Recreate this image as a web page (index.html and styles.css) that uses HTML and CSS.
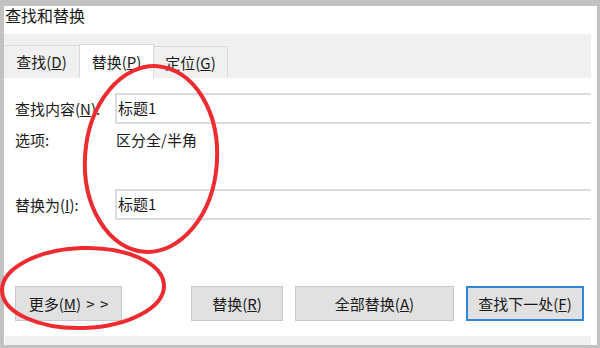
FILE: index.html
```html
<!DOCTYPE html>
<html lang="zh-CN">
<head>
<meta charset="utf-8">
<title>查找和替换</title>
<link rel="stylesheet" href="styles.css">
</head>
<body>
<div class="window">
  <div class="title">查找和替换</div>
  <div class="tabs">
    <div class="tab tab-find">查找(<u>D</u>)</div>
    <div class="tab tab-active">替换(<u>P</u>)</div>
    <div class="tab tab-goto">定位(<u>G</u>)</div>
  </div>
  <div class="panel">
    <div class="form">
      <div class="label">查找内容(<u>N</u>):</div>
      <div class="field">标题1</div>
      <div class="label label-top">选项:</div>
      <div class="value">区分全/半角</div>
      <div class="label">替换为(<u>I</u>):</div>
      <div class="field">标题1</div>
    </div>
    <div class="buttons">
      <button class="btn btn-more">更多(<u>M</u>) &gt; &gt;</button>
      <div class="actions">
        <button class="btn btn-replace">替换(<u>R</u>)</button>
        <button class="btn btn-all">全部替换(<u>A</u>)</button>
        <button class="btn btn-next">查找下一处(<u>F</u>)</button>
      </div>
    </div>
  </div>
  <div class="strip"></div>
  <svg class="marks" width="600" height="348" viewBox="0 0 600 348">
    <ellipse cx="151" cy="159" rx="66" ry="93" transform="rotate(4 151 159)" />
    <ellipse cx="83" cy="288" rx="81" ry="40" transform="rotate(-2 83 288)" />
  </svg>
</div>
</body>
</html>
```

FILE: styles.css
```css
* { box-sizing: border-box; }

html, body {
  margin: 0;
  padding: 0;
  background: #ffffff;
}

body {
  font-family: "Noto Sans CJK SC", "Noto Sans", sans-serif;
  font-size: 15px;
  color: #1a1a1a;
}

.window {
  position: relative;
  width: 600px;
  height: 348px;
  display: flex;
  flex-direction: column;
  background: #ffffff;
  border-style: solid;
  border-color: #c2c2c2;
  border-width: 6px 3px 3px 4px;
}

.title {
  height: 28px;
  padding: 0 0 0 1px;
  font-size: 16px;
  line-height: 19px;
}

.tabs {
  height: 44px;
  margin-right: 6px;
  background: #f0f0f0;
  display: flex;
  align-items: flex-end;
}

.tab {
  display: flex;
  align-items: center;
  justify-content: center;
  line-height: 18px;
  border: 1px solid #dadada;
  border-bottom: none;
}

.tab-find {
  width: 75px;
  height: 33px;
  border-left: none;
  border-right: none;
}

.tab-active {
  width: 75px;
  height: 34px;
  background: #ffffff;
  border-color: #d9d9d9;
}

.tab-goto {
  width: 74px;
  height: 32px;
  border-left: none;
}

.panel {
  flex: 1;
  padding: 15px 6px 0 11px;
  display: flex;
  flex-direction: column;
}

.form {
  display: grid;
  grid-template-columns: 100px 1fr;
  grid-template-rows: 31px 65px 31px;
}

.label {
  display: flex;
  align-items: center;
  line-height: 18px;
}

.label-top {
  align-items: flex-start;
  padding-top: 7px;
}

.value {
  padding: 7px 0 0 1px;
  line-height: 18px;
}

.field {
  border: 2px solid #dcdcdc;
  border-right: none;
  padding: 4px 0 0 1px;
  line-height: 18px;
}

.buttons {
  margin-top: 66px;
  display: flex;
  justify-content: space-between;
}

.actions {
  display: flex;
  gap: 12px;
  margin-right: 7px;
}

.btn {
  height: 35px;
  padding: 0;
  font: inherit;
  color: #1a1a1a;
  line-height: 18px;
  background: #e1e1e1;
  border: 1px solid #c9c9c9;
}

.btn-more { width: 107px; word-spacing: 2px; }
.btn-replace { width: 92px; }
.btn-all { width: 159px; }
.btn-next {
  width: 118px;
  border: 2px solid #2f86d9;
}

.strip {
  height: 9px;
  margin: 0 6px 0 1px;
  background: #f0f0f0;
}

.marks {
  position: absolute;
  left: -4px;
  top: -6px;
  pointer-events: none;
}

.marks ellipse {
  fill: none;
  stroke: #ee2b30;
  stroke-width: 4;
}
```
